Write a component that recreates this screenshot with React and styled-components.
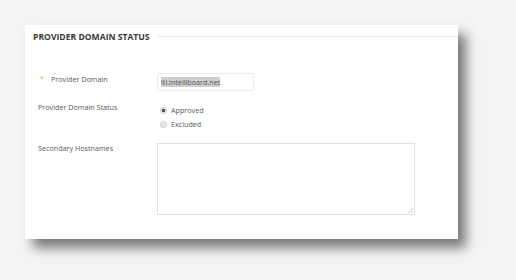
import React from 'react';
import styled, { createGlobalStyle } from 'styled-components';

const Global = createGlobalStyle`
  html, body { margin: 0; padding: 0; background: #f4f4f4; }
  body { font-family: "Open Sans", "Liberation Sans", sans-serif; }
`;

const Page = styled.div`
  width: 516px;
  height: 280px;
  box-sizing: border-box;
  padding: 25px 0 0 25px;
  background: #f4f4f4;
`;

const Card = styled.div`
  width: 433px;
  height: 214px;
  box-sizing: border-box;
  background: #fff;
  box-shadow: 8px 9px 11px rgba(0, 0, 0, 0.5);
  padding: 5px 0 0 8px;
`;

const Legend = styled.div`
  display: flex;
  align-items: center;
  gap: 8px;
  height: 13px;
  font-size: 8.6px;
  font-weight: 700;
  color: #3a3a3a;
`;

const Rule = styled.div`
  flex: 1;
  height: 1px;
  background: #e6e6e6;
`;

const Form = styled.div`
  display: grid;
  grid-template-columns: 119px 1fr;
  padding: 30px 0 0 5px;
  row-gap: 8px;
`;

const Label = styled.div`
  font-size: 7.2px;
  color: #5a5a5a;
  display: flex;
  align-items: flex-start;
  padding-top: ${p => p.$top || 0}px;
  padding-left: ${p => (p.$required ? 2 : 0)}px;
`;

const Star = styled.span`
  color: #f0a050;
  font-size: 7px;
  width: 11px;
`;

const Input = styled.div`
  width: 97px;
  height: 18px;
  box-sizing: border-box;
  border: 1px solid #ececec;
  border-radius: 2px;
  padding: 0 0 0 3px;
  display: flex;
  align-items: center;
`;

const Selected = styled.span`
  font-size: 7.2px;
  color: #555;
  background: #cfcfcf;
  line-height: 10px;
`;

const Radios = styled.div`
  display: flex;
  flex-direction: column;
  gap: 3px;
  padding: 5px 0 0 3px;
  margin-bottom: 6px;
`;

const RadioRow = styled.div`
  display: flex;
  align-items: center;
  gap: 4px;
  font-size: 7.2px;
  color: #5a5a5a;
  height: 11px;
`;

const Dot = styled.span`
  width: 7px;
  height: 7px;
  box-sizing: border-box;
  border-radius: 50%;
  border: 1px solid #c8c8c8;
  background: ${p => (p.$on ? 'radial-gradient(circle, #555 0 1.6px, #eee 2px)' : '#eaeaea')};
  margin-top: 2px;
`;

const TextArea = styled.div`
  position: relative;
  width: 258px;
  height: 72px;
  box-sizing: border-box;
  border: 1px solid #e2e2e2;
`;

const Grip = styled.svg`
  position: absolute;
  right: 1px;
  bottom: 1px;
`;

export default function App() {
  return (
    <Page>
      <Global />
      <Card>
        <Legend>
          PROVIDER DOMAIN STATUS
          <Rule />
        </Legend>
        <Form>
          <Label $required $top={1}>
            <Star>*</Star>Provider Domain
          </Label>
          <Input>
            <Selected>lti.intelliboard.net</Selected>
          </Input>
          <Label $top={3}>Provider Domain Status</Label>
          <Radios>
            <RadioRow><Dot $on />Approved</RadioRow>
            <RadioRow><Dot />Excluded</RadioRow>
          </Radios>
          <Label $top={0}>Secondary Hostnames</Label>
          <TextArea>
            <Grip width="5" height="5" viewBox="0 0 5 5">
              <path d="M5 0 L0 5 M5 2.5 L2.5 5" stroke="#bbb" strokeWidth="0.8" />
            </Grip>
          </TextArea>
        </Form>
      </Card>
    </Page>
  );
}
